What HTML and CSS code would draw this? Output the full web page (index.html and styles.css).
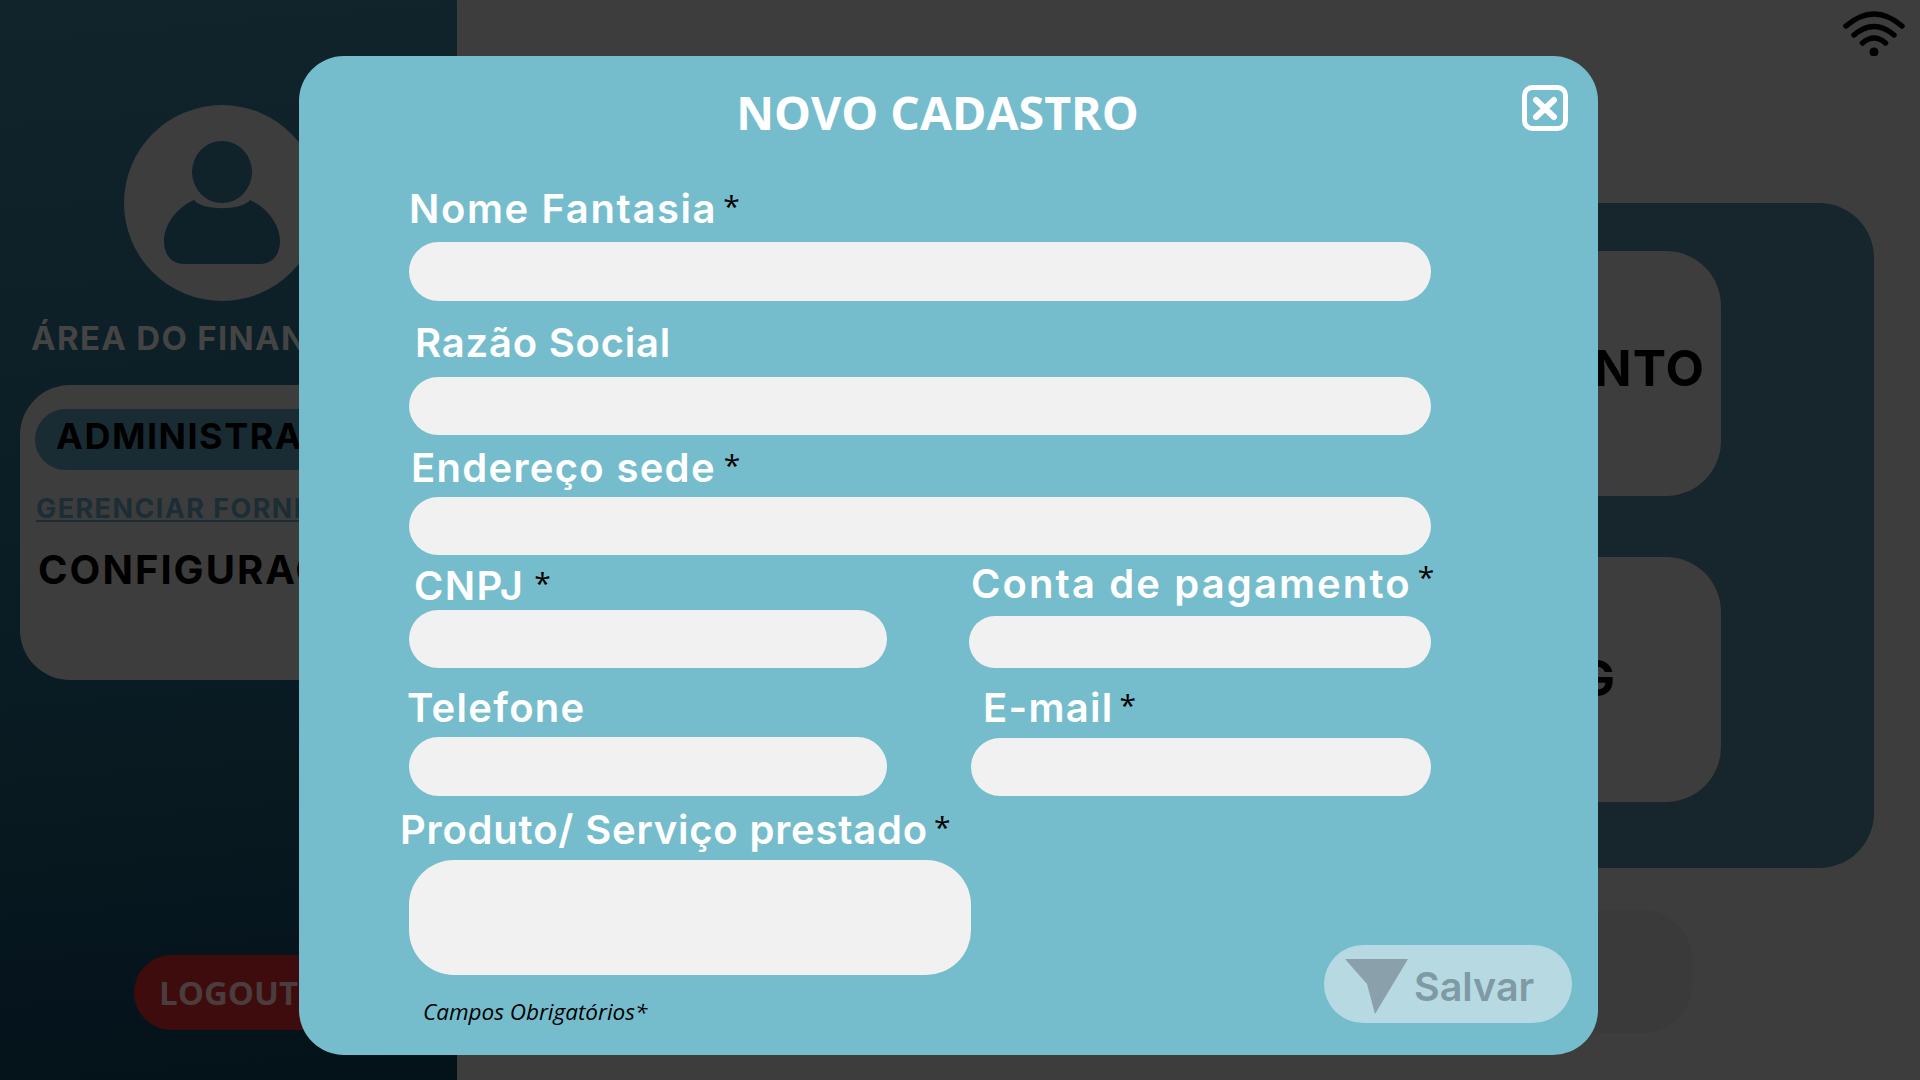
FILE: index.html
```html
<!DOCTYPE html>
<html lang="pt-BR">
<head>
    <meta charset="UTF-8">
    <meta name="viewport" content="width=device-width, initial-scale=1.0">
    <title>Novo Cadastro</title>
    <link rel="stylesheet" href="styles.css">
</head>
<body>
    <div class="app">
        <aside class="sidebar">
            <div class="avatar">
                <svg width="196" height="196" viewBox="0 0 196 196">
                    <ellipse cx="98" cy="67" rx="30" ry="31" fill="#10222a"/>
                    <path d="M70 95 C78 106 118 106 126 95 C146 104 156 122 156 136 C156 150 148 159 136 159 L60 159 C48 159 40 150 40 136 C40 122 50 104 70 95 Z" fill="#0e2028"/>
                </svg>
            </div>
            <h2 class="area-title">ÁREA DO FINANCEIRO</h2>
            <div class="menu-card">
                <div class="menu-pill">ADMINISTRAÇÃO</div>
                <a class="menu-link" href="#">GERENCIAR FORNECEDORES</a>
                <div class="menu-item">CONFIGURAÇÕES</div>
            </div>
            <button class="logout">LOGOUT</button>
        </aside>

        <main class="main">
            <section class="panel">
                <div class="panel-card"><span class="panel-text">PAGAMENTO</span></div>
                <div class="panel-card panel-card-log"><span class="panel-text">CATALOG</span></div>
            </section>
            <div class="ghost-pill"></div>
        </main>
    </div>

    <svg class="wifi" width="62" height="46" viewBox="0 0 62 46" fill="none" stroke="#000" stroke-width="5.5" stroke-linecap="round">
        <path d="M3 16 Q31 -8 59 16"/>
        <path d="M11 25 Q31 8 51 25"/>
        <path d="M19.5 33 Q31 23 42.5 33"/>
        <circle cx="31" cy="42" r="4.5" fill="#000" stroke="none"/>
    </svg>

    <div class="modal">
        <button class="close" aria-label="Fechar">
            <svg width="46" height="46" viewBox="0 0 46 46" fill="none" stroke="#fff" stroke-linecap="round">
                <rect x="2.5" y="2.5" width="41" height="41" rx="8" stroke-width="5"/>
                <path d="M14 15 L32 32 M32 15 L14 32" stroke-width="6"/>
            </svg>
        </button>

        <h1 class="modal-title">NOVO CADASTRO</h1>

        <form class="form">
            <div class="field f-nome">
                <label>Nome Fantasia<span class="req">*</span></label>
                <input type="text">
            </div>
            <div class="field f-razao">
                <label>Razão Social</label>
                <input type="text">
            </div>
            <div class="field f-endereco">
                <label>Endereço sede<span class="req">*</span></label>
                <input type="text">
            </div>
            <div class="row row-cnpj">
                <div class="field f-cnpj">
                    <label>CNPJ<span class="req">*</span></label>
                    <input type="text">
                </div>
                <div class="field f-conta">
                    <label>Conta de pagamento<span class="req req-high">*</span></label>
                    <input type="text">
                </div>
            </div>
            <div class="row row-tel">
                <div class="field f-tel">
                    <label>Telefone</label>
                    <input type="text">
                </div>
                <div class="field f-email">
                    <label>E-mail<span class="req">*</span></label>
                    <input type="text">
                </div>
            </div>
            <div class="field f-produto">
                <label>Produto/ Serviço prestado<span class="req">*</span></label>
                <textarea></textarea>
            </div>
            <p class="note">Campos Obrigatórios*</p>
        </form>

        <button class="save">
            <svg width="64" height="56" viewBox="0 0 64 56"><path d="M0 0 L63 0 L30 55 L22 25 Z" fill="#8aa1ac"/></svg>
            <span>Salvar</span>
        </button>
    </div>
</body>
</html>
```

FILE: styles.css
```css
* {
    box-sizing: border-box;
}
html, body {
    margin: 0;
    height: 100%;
    overflow: hidden;
}
body {
    background-color: #3d3d3d;
    font-family: Inter, "Liberation Sans", sans-serif;
}
.app {
    display: flex;
    height: 1080px;
}

/* sidebar, dimmed behind the modal */
.sidebar {
    width: 457px;
    height: 1080px;
    overflow: hidden;
    padding-top: 105px;
    background: linear-gradient(175deg, #11242b 0%, #0a1c23 60%, #04121a 100%);
}
.avatar {
    width: 196px;
    height: 196px;
    margin-left: 124px;
    border-radius: 50%;
    background-color: #3d3d3d;
}
.area-title {
    margin: 17px 0 27px 31px;
    font-size: 33px;
    line-height: 40px;
    font-weight: 700;
    letter-spacing: 1.3px;
    color: #444;
    white-space: nowrap;
}
.menu-card {
    width: 420px;
    height: 295px;
    margin-left: 20px;
    padding: 24px 0 0 15px;
    border-radius: 50px;
    background-color: #3d3d3d;
    white-space: nowrap;
}
.menu-pill {
    width: 380px;
    height: 61px;
    padding: 0 0 6px 21px;
    border-radius: 31px;
    background-color: #1a2c33;
    color: #000;
    font-size: 36px;
    line-height: 55px;
    font-weight: 700;
    letter-spacing: 1.5px;
}
.menu-link {
    display: block;
    margin: 22px 0 0 1px;
    color: #1c2d35;
    font-size: 27px;
    line-height: 34px;
    font-weight: 700;
    letter-spacing: 1.4px;
}
.menu-item {
    margin: 21px 0 0 3px;
    color: #000;
    font-size: 40px;
    line-height: 46px;
    font-weight: 700;
    letter-spacing: 2px;
}
.logout {
    display: block;
    width: 300px;
    height: 75px;
    margin: 275px 0 0 134px;
    padding: 0 0 0 25px;
    border: none;
    border-radius: 38px;
    background-color: #3f0c0d;
    color: #4b3c3e;
    font-family: "Open Sans", sans-serif;
    font-size: 33px;
    font-weight: 700;
    text-align: left;
}

/* main area */
.main {
    flex: 1;
    padding: 203px 46px 0 0;
}
.panel {
    height: 665px;
    margin-left: 300px;
    padding: 48px 153px 0 0;
    border-radius: 55px;
    background-color: #16262c;
}
.panel-card {
    display: flex;
    align-items: center;
    justify-content: flex-end;
    height: 245px;
    padding: 0 16px 12px 0;
    border-radius: 55px;
    background-color: #3d3d3d;
}
.panel-card-log {
    margin-top: 61px;
    padding: 0 105px 4px 0;
}
.panel-text {
    color: #000;
    font-size: 50px;
    font-weight: 700;
    letter-spacing: 1px;
    white-space: nowrap;
}
.ghost-pill {
    width: 500px;
    height: 123px;
    margin: 42px 182px 0 auto;
    border-radius: 50px;
    background-color: #3a3a3a;
}
.wifi {
    position: absolute;
    top: 10px;
    left: 1843px;
}

/* modal */
.modal {
    position: absolute;
    top: 56px;
    left: 299px;
    width: 1299px;
    height: 999px;
    border-radius: 45px;
    background-color: #75bdcc;
}
.close {
    position: absolute;
    top: 29px;
    left: 1223px;
    width: 46px;
    height: 46px;
    padding: 0;
    border: none;
    background: none;
}
.close svg {
    display: block;
}
.modal-title {
    margin: 0;
    padding: 23px 22px 0 0;
    color: #fff;
    font-family: "Open Sans", sans-serif;
    font-size: 46.5px;
    line-height: 66px;
    font-weight: 700;
    text-align: center;
}
.form {
    width: 1022px;
    margin-left: 110px;
    padding-top: 42px;
}
.field {
    display: block;
}
.field label {
    display: block;
    height: 40px;
    color: #fff;
    font-size: 40px;
    line-height: 40px;
    font-weight: 600;
    letter-spacing: 1.3px;
    white-space: nowrap;
}
.field input, .field textarea {
    display: block;
    width: 100%;
    border: none;
    background-color: #f1f1f1;
    resize: none;
}
.field input {
    height: 59px;
    border-radius: 30px;
}
.field textarea {
    width: 562px;
    height: 115px;
    border-radius: 45px;
}
.req {
    margin-left: 6px;
    color: #000;
    font-family: "Open Sans", sans-serif;
    font-size: 30px;
    font-weight: 400;
    letter-spacing: 0;
    vertical-align: 6px;
}
.req-high {
    vertical-align: 10px;
}
.row {
    display: flex;
    justify-content: space-between;
}

/* label and input offsets per field */
.f-nome label { margin-top: -1px; letter-spacing: 1.6px; }
.f-nome input { margin-top: 16px; }
.f-razao { margin-top: 22px; }
.f-razao label { padding-left: 6px; letter-spacing: 0.8px; }
.f-razao input { margin-top: 14px; height: 58px; }
.f-endereco { margin-top: 10px; }
.f-endereco label { padding-left: 2px; }
.f-endereco .req { margin-left: 8px; }
.f-endereco input { margin-top: 12px; height: 58px; }
.row-cnpj { margin-top: 9px; }
.f-cnpj, .f-tel { width: 478px; }
.f-cnpj label { margin-top: -1px; padding-left: 5px; }
.f-cnpj .req { margin-left: 10px; }
.f-cnpj input { margin-top: 7px; height: 58px; }
.f-conta { width: 462px; }
.f-conta label { margin-top: -7px; padding-left: 2px; letter-spacing: 2.1px; }
.f-conta input { margin-top: 19px; height: 52px; }
.row-tel { margin-top: 20px; }
.f-tel label { margin-left: -2px; }
.f-tel input { margin-top: 9px; }
.f-email { width: 460px; }
.f-email label { margin-top: -3px; padding-left: 12px; }
.f-email input { margin-top: 13px; height: 58px; }
.f-produto { margin-top: 11px; }
.f-produto label { margin-left: -9px; letter-spacing: 0.8px; }
.f-produto textarea { margin-top: 13px; }
.note {
    margin: 22px 0 0 14px;
    color: #000;
    font-family: "Open Sans", sans-serif;
    font-size: 22.5px;
    line-height: 30px;
    font-style: italic;
}
.save {
    position: absolute;
    top: 889px;
    left: 1025px;
    display: flex;
    align-items: center;
    width: 248px;
    height: 78px;
    padding: 0 0 0 21px;
    border: none;
    border-radius: 39px;
    background-color: #b7d9e2;
    color: #7f9aa4;
    font-family: Inter, sans-serif;
    font-size: 39.5px;
    font-weight: 600;
}
.save svg {
    flex: none;
    margin: 6px 5px 0 0;
}
.save span {
    margin-top: 5px;
}
```
